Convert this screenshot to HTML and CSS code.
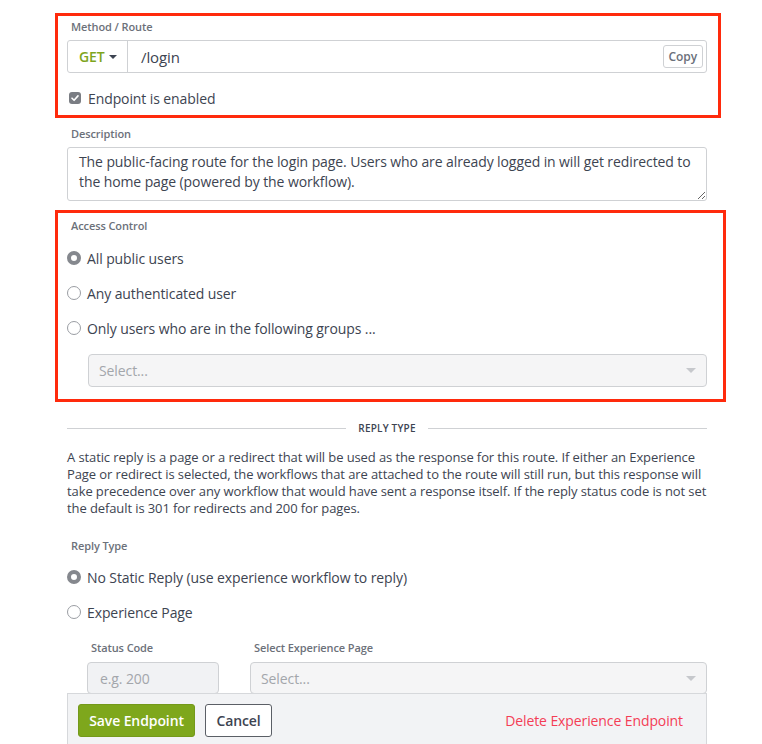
FILE: index.html
```html
<!DOCTYPE html>
<html>
<head>
<meta charset="utf-8">
<link rel="stylesheet" href="styles.css">
</head>
<body>
<div class="page">
  <section class="hl hl-route">
    <div class="label">Method / Route</div>
    <div class="input-group">
      <div class="addon">GET <span class="caret"></span></div>
      <div class="route-input">
        <span>/login</span>
        <button class="copy">Copy</button>
      </div>
    </div>
    <label class="check-row">
      <span class="checkbox"><svg viewBox="0 0 12 12" width="12" height="12"><path d="M3 6.2 L5.1 8.3 L9 3.9" fill="none" stroke="#fff" stroke-width="1.6" stroke-linecap="round" stroke-linejoin="round"/></svg></span>
      Endpoint is enabled
    </label>
  </section>

  <div class="label desc-label">Description</div>
  <textarea class="textarea" wrap="off">The public-facing route for the login page. Users who are already logged in will get redirected to
the home page (powered by the workflow).</textarea>

  <section class="hl hl-access">
    <div class="label">Access Control</div>
    <div class="radios">
      <div class="radio-row"><span class="radio on"></span>All public users</div>
      <div class="radio-row"><span class="radio"></span>Any authenticated user</div>
      <div class="radio-row"><span class="radio"></span>Only users who are in the following groups ...</div>
    </div>
    <div class="select indented"><span>Select...</span><span class="sel-caret"></span></div>
  </section>

  <div class="divider"><span class="line"></span><span class="div-text">REPLY TYPE</span><span class="line"></span></div>

  <p class="info">A static reply is a page or a redirect that will be used as the response for this route. If either an Experience Page or redirect is selected, the workflows that are attached to the route will still run, but this response will take precedence over any workflow that would have sent a response itself. If the reply status code is not set the default is 301 for redirects and 200 for pages.</p>

  <div class="label reply-label">Reply Type</div>
  <div class="radios radios-reply">
    <div class="radio-row"><span class="radio on"></span>No Static Reply (use experience workflow to reply)</div>
    <div class="radio-row"><span class="radio"></span>Experience Page</div>
  </div>

  <div class="page-fields">
    <div class="field status">
      <div class="label">Status Code</div>
      <div class="text-input">e.g. 200</div>
    </div>
    <div class="field page-sel">
      <div class="label">Select Experience Page</div>
      <div class="select"><span>Select...</span><span class="sel-caret"></span></div>
    </div>
  </div>

  <div class="footer">
    <button class="btn btn-save">Save Endpoint</button>
    <button class="btn btn-cancel">Cancel</button>
    <span class="delete">Delete Experience Endpoint</span>
  </div>
</div>
</body>
</html>
```

FILE: styles.css
```css
* { box-sizing: border-box; }
html, body { margin: 0; padding: 0; background: #fff; }
body {
  font-family: "Open Sans", "Noto Sans", sans-serif;
  letter-spacing: -0.1px;
  color: #3d4451;
  width: 762px;
  height: 744px;
  overflow: hidden;
}
.page {
  padding: 13px 55px 0 67px;
}
.label {
  font-size: 11px;
  line-height: 14px;
  font-weight: 600;
  color: #6c717a;
  padding-left: 4px;
}
.hl {
  border: 3px solid #ff2a0c;
}
.hl-route {
  margin: 0 -14px 0 -12px;
  padding: 4px 11px 7px 9px;
}
.input-group {
  margin-top: 6px;
  display: flex;
  height: 33px;
  border: 1px solid #cfd1d4;
  border-radius: 3px;
}
.addon {
  width: 60px;
  border-right: 1px solid #cfd1d4;
  display: flex;
  align-items: center;
  padding-left: 11px;
  font-size: 14px;
  font-weight: 600;
  color: #7ea51c;
}
.caret {
  display: inline-block;
  margin-left: 4px;
  width: 0; height: 0;
  border-left: 4px solid transparent;
  border-right: 4px solid transparent;
  border-top: 4px solid #3d4451;
}
.route-input {
  flex: 1;
  display: flex;
  align-items: center;
  justify-content: space-between;
  padding: 0 3px 0 13px;
  font-size: 15px;
}
.copy {
  font-family: inherit;
  letter-spacing: inherit;
  font-size: 12px;
  font-weight: 600;
  color: #6b707a;
  background: #fff;
  border: 1px solid #cfd1d4;
  border-radius: 3px;
  height: 23px;
  padding: 0 5px;
}
.check-row {
  display: flex;
  align-items: center;
  margin-top: 15px;
  height: 20px;
  font-size: 14px;
  padding-left: 2px;
}
.checkbox {
  width: 12px; height: 12px;
  border-radius: 3px;
  background: #7a7d83;
  margin-right: 7px;
  display: inline-flex;
}
.desc-label { margin-top: 9px; }
.textarea {
  display: block;
  margin-top: 6px;
  width: 640px;
  height: 54px;
  border: 1px solid #cfd1d4;
  border-radius: 3px;
  padding: 4px 11px;
  font-family: inherit;
  letter-spacing: inherit;
  font-size: 14px;
  line-height: 20px;
  color: #3d4451;
  overflow: hidden;
  resize: vertical;
}
.hl-access {
  margin: 9px -19px 0 -12px;
  padding: 6px 16px 12px 9px;
}
.radios { margin-top: 15px; display: flex; flex-direction: column; gap: 15px; }
.radio-row {
  display: flex;
  align-items: center;
  height: 20px;
  font-size: 14px;
}
.radio {
  width: 14px; height: 14px;
  border-radius: 50%;
  border: 1px solid #9a9da3;
  margin-right: 6px;
  background: #fff;
  flex: none;
}
.radio.on {
  border: 4px solid #85888e;
  background: #fff;
}
.select {
  height: 33px;
  border: 1px solid #cfd1d4;
  border-radius: 4px;
  background: #f5f5f6;
  display: flex;
  align-items: center;
  justify-content: space-between;
  padding: 0 10px 0 10px;
  font-size: 14px;
  color: #a3a6ab;
}
.indented { margin: 16px 0 0 21px; }
.sel-caret {
  width: 0; height: 0;
  border-left: 5px solid transparent;
  border-right: 5px solid transparent;
  border-top: 5px solid #c6c8cc;
}
.divider {
  margin-top: 19px;
  display: flex;
  align-items: center;
  height: 14px;
  gap: 12px;
}
.divider .line { flex: 1; height: 1px; background: #cfd1d4; }
.div-text {
  font-size: 10px;
  font-weight: 600;
  color: #3d4451;
  letter-spacing: 0.2px;
}
.info {
  margin: 14px 0 0 0;
  font-size: 13px;
  line-height: 17px;
}
.reply-label { margin-top: 22px; }
.radios-reply { margin-top: 14px; }
.page-fields {
  margin: 19px 0 0 20px;
  display: flex;
  gap: 31px;
}
.field .label { margin-bottom: 7px; }
.status { width: 132px; }
.page-sel { flex: 1; }
.text-input {
  height: 32px;
  border: 1px solid #cfd1d4;
  border-radius: 4px;
  background: #f1f2f4;
  display: flex;
  align-items: center;
  padding-left: 12px;
  font-size: 14px;
  color: #a3a6ab;
}
.page-sel .select { height: 32px; }
.footer {
  margin-top: -1px;
  position: relative;
  height: 60px;
  background: #f2f3f5;
  border: 1px solid #d6d8db;
  border-bottom: none;
  display: flex;
  align-items: flex-start;
  padding: 10px 23px 0 10px;
}
.btn {
  font-family: inherit;
  letter-spacing: inherit;
  font-size: 14px;
  font-weight: 600;
  height: 33px;
  border-radius: 3px;
  cursor: pointer;
}
.btn-save {
  width: 117px;
  background: #7ea71c;
  border: 1px solid #74991a;
  color: #fff;
}
.btn-cancel {
  margin-left: 10px;
  width: 67px;
  background: #fff;
  border: 1px solid #5b5f66;
  color: #3d4451;
}
.delete {
  margin-left: auto;
  line-height: 33px;
  font-size: 14px;
  font-weight: 500;
  color: #f43d55;
}
```
